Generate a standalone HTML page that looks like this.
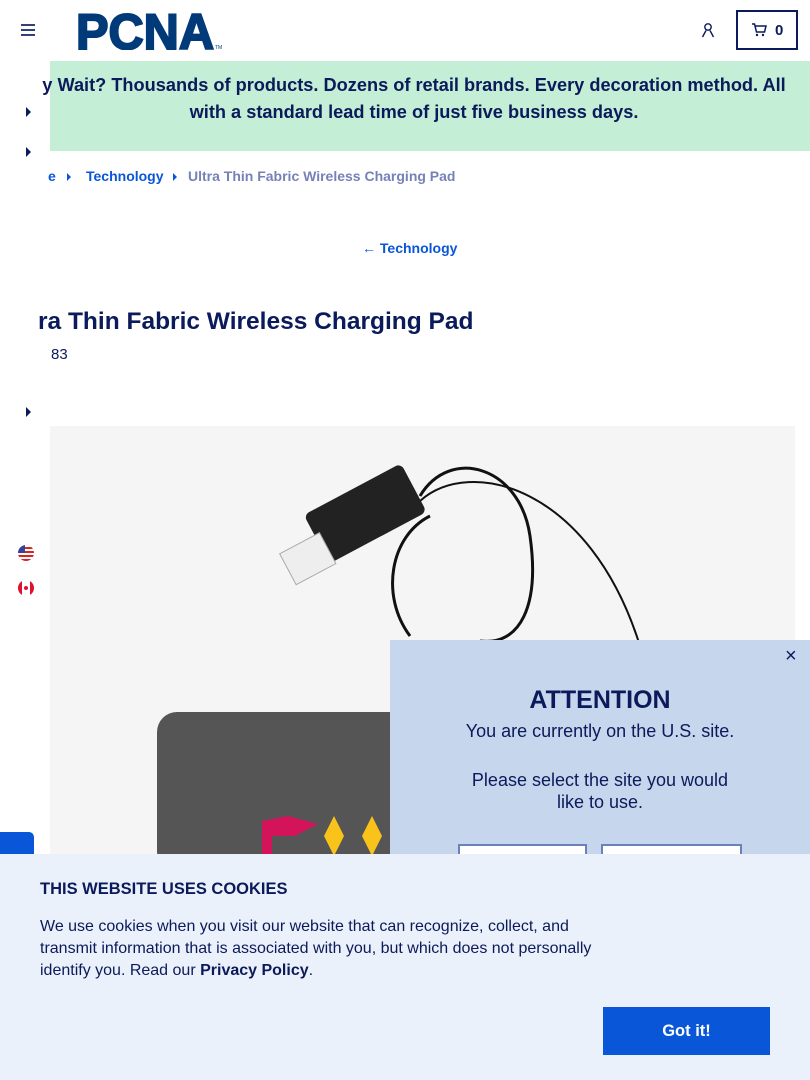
<!DOCTYPE html>
<html><head><meta charset="utf-8"><style>
*{margin:0;padding:0;box-sizing:border-box}
body{width:810px;height:1080px;overflow:hidden;position:relative;font-family:"Liberation Sans",Arial,sans-serif;background:#fff;color:#0b1a5a}
.abs{position:absolute}
.tri{position:absolute;width:0;height:0;border-top:5px solid transparent;border-bottom:5px solid transparent;border-left:5px solid #0b1a5a}
</style></head><body>
<div class="abs" style="left:21px;top:24px;width:14px;height:2px;background:#33417a;box-shadow:0 5px 0 #33417a,0 10px 0 #33417a"></div>
<svg class="abs" style="left:76px;top:10px" width="148" height="40" viewBox="0 0 148 40">
<text x="0" y="39" font-family="Liberation Sans" font-weight="bold" font-size="50" fill="#003a78" textLength="138" lengthAdjust="spacingAndGlyphs" stroke="#003a78" stroke-width="2">PCNA</text>
<text x="139" y="39" font-size="5" fill="#003a78">TM</text></svg>
<svg class="abs" style="left:701px;top:22px" width="14" height="16" viewBox="0 0 14 16"><circle cx="7" cy="5" r="3.2" fill="none" stroke="#0b1a5a" stroke-width="1.4"/><path d="M1.5 15 L5 8.5 M12.5 15 L9 8.5" stroke="#0b1a5a" stroke-width="1.4"/></svg>
<div class="abs" style="left:736px;top:10px;width:62px;height:40px;border:2px solid #0b1a5a"></div>
<svg class="abs" style="left:751px;top:23px" width="16" height="14" viewBox="0 0 16 14"><path d="M1 1h2.5l2 8h8l1.5-6H4" fill="none" stroke="#0b1a5a" stroke-width="1.5"/><circle cx="6" cy="12" r="1.2" fill="#0b1a5a"/><circle cx="12" cy="12" r="1.2" fill="#0b1a5a"/></svg>
<div class="abs" style="left:775px;top:22px;font-weight:bold;font-size:15px">0</div>
<div class="abs" style="left:50px;top:61px;width:760px;height:90px;background:#c4eed5"></div>
<div class="abs" style="left:0;top:72px;width:828px;text-align:center;font-weight:bold;font-size:18.2px;line-height:27px;color:#0b1a5a;white-space:nowrap">y Wait? Thousands of products. Dozens of retail brands. Every decoration method. All<br>with a standard lead time of just five business days.</div>
<div class="tri" style="left:26px;top:107px"></div>
<div class="tri" style="left:26px;top:147px"></div>
<div class="tri" style="left:26px;top:407px"></div>
<div class="abs" style="left:48px;top:168px;font-size:14px;font-weight:bold;color:#0a56d8">e</div>
<div class="tri" style="left:67px;top:173px;border-width:4px 0 4px 4px;border-left-color:#0a56d8"></div>
<div class="abs" style="left:86px;top:168px;font-size:14px;font-weight:bold;color:#0a56d8">Technology</div>
<div class="tri" style="left:173px;top:173px;border-width:4px 0 4px 4px;border-left-color:#0a56d8"></div>
<div class="abs" style="left:188px;top:168px;font-size:14px;font-weight:bold;color:#7582b8">Ultra Thin Fabric Wireless Charging Pad</div>
<div class="abs" style="left:362px;top:240px;font-size:14px;font-weight:bold;color:#0a56d8">← Technology</div>
<div class="abs" style="left:38px;top:308px;font-size:24.5px;font-weight:bold;color:#0b1a5a">ra Thin Fabric Wireless Charging Pad</div>
<div class="abs" style="left:51px;top:346px;font-size:15px;color:#0b1a5a">83</div>
<div class="abs" style="left:50px;top:426px;width:745px;height:440px;background:#f5f5f5"></div>
<svg class="abs" style="left:50px;top:426px" width="745" height="440" viewBox="0 0 745 440">
<path d="M370 70 C400 20 470 40 480 110 C490 180 470 220 430 215" fill="none" stroke="#111" stroke-width="3"/>
<path d="M360 210 C330 170 340 110 380 90" fill="none" stroke="#111" stroke-width="3"/>
<path d="M370 75 C420 30 540 60 590 220" fill="none" stroke="#111" stroke-width="2"/>
<rect x="260" y="60" width="110" height="55" rx="6" transform="rotate(-28 315 87)" fill="#222"/>
<rect x="235" y="115" width="45" height="35" transform="rotate(-28 258 132)" fill="#eee" stroke="#aaa"/>
<rect x="107" y="286" width="300" height="160" rx="20" fill="#555"/>
<path d="M212 395 L238 390 L268 398 L245 410 L222 410 L222 430 L212 430Z" fill="#d4145a"/>
<path d="M284 390 L294 410 L284 430 L274 410Z M322 390 L332 410 L322 430 L312 410Z" fill="#f9c31b"/>
</svg>
<svg class="abs" style="left:18px;top:545px" width="16" height="16" viewBox="0 0 16 16"><clipPath id="c"><circle cx="8" cy="8" r="8"/></clipPath><g clip-path="url(#c)"><rect width="16" height="16" fill="#fff"/><rect y="2" width="16" height="2" fill="#d22"/><rect y="6" width="16" height="2" fill="#d22"/><rect y="10" width="16" height="2" fill="#d22"/><rect y="14" width="16" height="2" fill="#d22"/><rect width="7" height="8" fill="#33439a"/></g></svg>
<svg class="abs" style="left:18px;top:580px" width="16" height="16" viewBox="0 0 16 16"><clipPath id="d"><circle cx="8" cy="8" r="8"/></clipPath><g clip-path="url(#d)"><rect width="16" height="16" fill="#fff"/><rect width="4" height="16" fill="#e01030"/><rect x="12" width="4" height="16" fill="#e01030"/><circle cx="8" cy="8" r="2" fill="#e01030"/></g></svg>
<div class="abs" style="left:0;top:832px;width:34px;height:30px;background:#0a56d8;border-radius:0 5px 0 0"></div>
<div class="abs" style="left:390px;top:640px;width:420px;height:240px;background:#c6d6ec"></div>
<div class="abs" style="left:785px;top:645px;font-size:20px;color:#0b1a5a">×</div>
<div class="abs" style="left:390px;top:686px;width:420px;text-align:center;color:#0b1a5a">
<div style="font-size:25px;font-weight:bold">ATTENTION</div>
<div style="font-size:18px;margin-top:5px;line-height:22px">You are currently on the U.S. site.</div>
<div style="font-size:18px;margin-top:27px;line-height:22px">Please select the site you would<br>like to use.</div></div>
<div class="abs" style="left:458px;top:844px;width:129px;height:20px;border:2px solid #6d80bb;background:#fff"></div>
<div class="abs" style="left:601px;top:844px;width:141px;height:20px;border:2px solid #6d80bb;background:#fff"></div>
<div class="abs" style="left:0;top:854px;width:810px;height:226px;background:#ebf1fa"></div>
<div class="abs" style="left:40px;top:880px;font-size:16.5px;font-weight:bold;color:#0b1a5a">THIS WEBSITE USES COOKIES</div>
<div class="abs" style="left:40px;top:916px;width:570px;font-size:16px;line-height:22px;color:#0b1a5a">We use cookies when you visit our website that can recognize, collect, and transmit information that is associated with you, but which does not personally identify you. Read our <b>Privacy Policy</b>.</div>
<div class="abs" style="left:603px;top:1007px;width:167px;height:48px;background:#0a56d8;color:#fff;font-size:16.5px;font-weight:bold;text-align:center;line-height:48px">Got it!</div>
</body></html>
